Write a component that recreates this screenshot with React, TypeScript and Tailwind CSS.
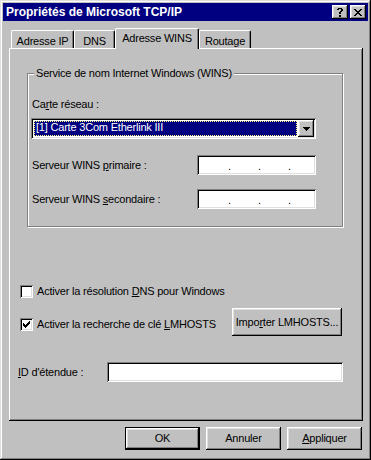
import React from "react";

const raised =
  "shadow-[inset_-1px_-1px_0_#000,inset_1px_1px_0_#fff,inset_-2px_-2px_0_#808080,inset_2px_2px_0_#dfdfdf]";
const sunken =
  "shadow-[inset_1px_1px_0_#808080,inset_-1px_-1px_0_#fff,inset_2px_2px_0_#000,inset_-2px_-2px_0_#dfdfdf]";

function Pixels({ rows }: { rows: string[] }) {
  const w = rows[0].length;
  const h = rows.length;
  return (
    <svg width={w} height={h} viewBox={`0 0 ${w} ${h}`} shapeRendering="crispEdges">
      {rows.map((r, y) =>
        r.split("").map((c, x) =>
          c === "X" ? <rect key={`${x}-${y}`} x={x} y={y} width="1" height="1" fill="#000" /> : null
        )
      )}
    </svg>
  );
}

const closeRows = [
  "XX....XX",
  ".XX..XX.",
  "..XXXX..",
  "...XX...",
  "..XXXX..",
  ".XX..XX.",
  "XX....XX",
];
const helpRows = [
  ".XXXX.",
  "XX..XX",
  "....XX",
  "...XX.",
  "..XX..",
  "..XX..",
  "......",
  "..XX..",
  "..XX..",
];
const checkRows = [
  "......X",
  ".....XX",
  "X...XXX",
  "XX.XXX.",
  "XXXXX..",
  ".XXX...",
  "..X....",
];
const arrowRows = ["XXXXXXX", ".XXXXX.", "..XXX..", "...X..."];

function Checkbox({ checked }: { checked?: boolean }) {
  return (
    <div className={`w-[13px] h-[13px] bg-white flex items-center justify-center shrink-0 ${sunken}`}>
      {checked ? <Pixels rows={checkRows} /> : null}
    </div>
  );
}

function IpField() {
  return (
    <div className={`w-[119px] h-[20px] bg-white flex items-end pb-[3px] pl-[31px] gap-[27px] leading-[11px] ${sunken}`}>
      <span className="w-[3px]">.</span>
      <span className="w-[3px]">.</span>
      <span className="w-[3px]">.</span>
    </div>
  );
}

function Tab({ label, width, selected }: { label: string; width: string; selected?: boolean }) {
  return (
    <div
      className={`${width} ${
        selected ? "h-[21px] relative z-10 -mb-px pt-[3px]" : "h-[18px] pt-[4px]"
      } bg-[#c0c0c0] border-t border-l border-white border-r border-r-black rounded-tl-[2px] rounded-tr-[2px] shadow-[inset_-1px_0_0_#808080] text-center leading-[13px]`}
    >
      {label}
    </div>
  );
}

export default function App() {
  return (
    <div
      className="w-[371px] h-[460px] bg-[#c0c0c0] p-[3px] flex flex-col text-[11px] tracking-[-0.2px] text-black shadow-[inset_-1px_-1px_0_#000,inset_1px_1px_0_#dfdfdf,inset_-2px_-2px_0_#808080,inset_2px_2px_0_#fff]"
      style={{ fontFamily: '"Liberation Sans", Arial, sans-serif' }}
    >
      {/* Title bar */}
      <div className="h-[18px] bg-[#000080] flex items-center pl-[3px] pr-[2px]">
        <span className="text-white font-bold text-[12px] leading-[14px] tracking-normal">Propriétés de Microsoft TCP/IP</span>
        <div className="ml-auto flex gap-[2px]">
          <div className={`w-[16px] h-[14px] bg-[#c0c0c0] flex items-center justify-center ${raised}`}>
            <Pixels rows={helpRows} />
          </div>
          <div className={`w-[16px] h-[14px] bg-[#c0c0c0] flex items-center justify-center ${raised}`}>
            <Pixels rows={closeRows} />
          </div>
        </div>
      </div>

      {/* Tabs */}
      <div className="mt-[7px] ml-[8px] h-[20px] flex items-end">
        <Tab label="Adresse IP" width="w-[63px]" />
        <Tab label="DNS" width="w-[41px]" />
        <Tab label="Adresse WINS" width="w-[84px]" selected />
        <Tab label="Routage" width="w-[52px]" />
      </div>

      {/* Panel */}
      <div className="ml-[6px] w-[354px] h-[373px] flex flex-col shadow-[inset_-1px_-1px_0_#000,inset_1px_1px_0_#fff,inset_-2px_-2px_0_#808080]">
        {/* Group box */}
        <div className="mt-[25px] ml-[18px] w-[316px] h-[154px] relative border border-[#808080] shadow-[inset_1px_1px_0_#fff,1px_1px_0_#fff] pl-[3px] flex flex-col">
          <div className="absolute top-[-7px] left-[6px] px-[2px] bg-[#c0c0c0] leading-[13px]">
            Service de nom Internet Windows (WINS)
          </div>
          <div className="mt-[24px] ml-px leading-[13px]">
            Ca<u className="underline-offset-[1px]">r</u>te réseau :
          </div>
          <div className={`mt-[7px] w-[285px] h-[21px] bg-white flex items-center pl-[3px] pr-[2px] ${sunken}`}>
            <div className="flex-1 h-[15px] bg-[#000080] text-white leading-[13px] pl-[2px] outline outline-1 outline-dotted outline-[#ffff80] -outline-offset-1 mr-px">
              [1] Carte 3Com Etherlink III
            </div>
            <div className={`w-[16px] h-[17px] bg-[#c0c0c0] flex items-center justify-center ${raised}`}>
              <Pixels rows={arrowRows} />
            </div>
          </div>
          <div className="mt-[16px] flex items-center">
            <div className="w-[166px] pl-px leading-[13px]">
              Serveur WINS <u className="underline-offset-[1px]">p</u>rimaire :
            </div>
            <IpField />
          </div>
          <div className="mt-[14px] flex items-center">
            <div className="w-[166px] pl-px leading-[13px]">
              Serveur WINS <u className="underline-offset-[1px]">s</u>econdaire :
            </div>
            <IpField />
          </div>
        </div>

        {/* Checkbox 1 */}
        <div className="mt-[58px] ml-[11px] flex items-center h-[13px]">
          <Checkbox />
          <span className="ml-[4px] leading-[13px]">
            Activer la résolution <u className="underline-offset-[1px]">D</u>NS pour Windows
          </span>
        </div>

        {/* Checkbox 2 + button */}
        <div className="mt-[10px] ml-[11px] mr-[21px] flex items-start h-[28px]">
          <div className="mt-[10px] flex items-center">
            <Checkbox checked />
            <span className="ml-[4px] leading-[13px]">
              Activer la recherche de clé <u className="underline-offset-[1px]">L</u>MHOSTS
            </span>
          </div>
          <div className={`ml-auto w-[110px] h-[28px] bg-[#c0c0c0] flex items-center justify-center leading-[13px] ${raised}`}>
            <span>
              Impo<u className="underline-offset-[1px]">r</u>ter LMHOSTS...
            </span>
          </div>
        </div>

        {/* ID row */}
        <div className="mt-[26px] ml-[9px] flex items-center h-[20px]">
          <div className="w-[89px] leading-[13px]">
            <u className="underline-offset-[1px]">I</u>D d'étendue :
          </div>
          <div className={`w-[236px] h-[20px] bg-white ${sunken}`} />
        </div>
      </div>

      {/* Bottom buttons */}
      <div className="mt-[6px] flex justify-end gap-[6px] pr-[6px]">
        <div className="w-[75px] h-[23px] border border-black">
          <div className={`w-full h-full bg-[#c0c0c0] flex items-center justify-center leading-[13px] ${raised}`}>
            OK
          </div>
        </div>
        <div className={`w-[75px] h-[23px] bg-[#c0c0c0] flex items-center justify-center leading-[13px] ${raised}`}>
          Annuler
        </div>
        <div className={`w-[75px] h-[23px] bg-[#c0c0c0] flex items-center justify-center leading-[13px] ${raised}`}>
          <span>
            <u className="underline-offset-[1px]">A</u>ppliquer
          </span>
        </div>
      </div>
    </div>
  );
}
